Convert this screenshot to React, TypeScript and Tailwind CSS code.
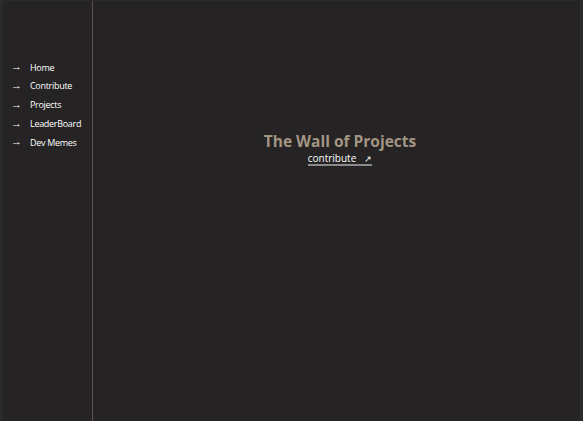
const links = ["Home", "Contribute", "Projects", "LeaderBoard", "Dev Memes"];

export default function App() {
  return (
    <div className="flex h-[421px] w-[583px] overflow-hidden border-t border-l-[3px] border-r-[3px] border-[#2c2b2b] bg-[#252324] font-['Open_Sans',sans-serif]">
      <aside className="w-[90px] shrink-0 border-r border-[#5c5249] pt-[57px]">
        <ul className="flex flex-col">
          {links.map((l) => (
            <li key={l} className="flex h-[18.75px] items-center text-[9px] tracking-[-0.3px] text-white">
              <span className="mb-[3px] w-[27px] shrink-0 pl-[8px] text-[11px] font-bold leading-none">→</span>
              <span>{l}</span>
            </li>
          ))}
        </ul>
      </aside>
      <main className="flex flex-1 flex-col items-center pl-[7px] pt-[132px]">
        <h1 className="text-[15.5px] leading-[17px] font-bold text-[#a39583]">The Wall of Projects</h1>
        <a className="mt-[3px] border-b-2 border-[#8a8a8a] text-[10px] leading-[10px] text-white">
          contribute<span className="ml-[8px] text-[9px]">↗</span>
        </a>
      </main>
    </div>
  );
}
